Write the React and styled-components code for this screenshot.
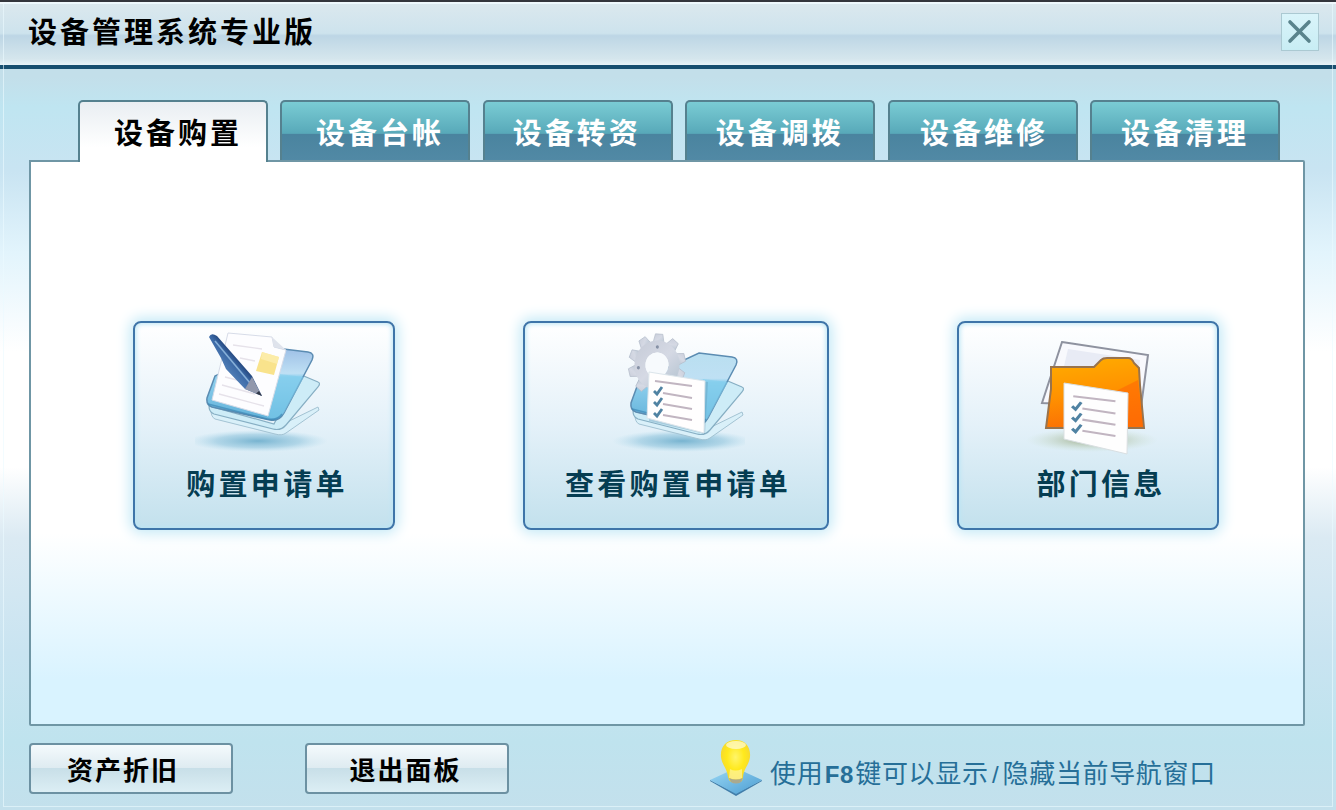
import styled, { createGlobalStyle, css } from 'styled-components';

const tabs = [
  { label: '设备购置', shift: 10 },
  { label: '设备台帐', shift: 9 },
  { label: '设备转资', shift: -2 },
  { label: '设备调拨', shift: -1 },
  { label: '设备维修', shift: 3 },
  { label: '设备清理', shift: 0 },
];

const cards = [
  { label: '购置申请单', width: 262, shift: 6, icon: DocumentIcon },
  { label: '查看购置申请单', width: 306, shift: 4, icon: GearIcon },
  { label: '部门信息', width: 262, shift: 26, icon: FolderIcon },
];

const App = () => {
  return (
    <>
      <GlobalStyle />
      <Window>
        <TitleBar>
          <h1>设备管理系统专业版</h1>
          <CloseButton aria-label="关闭">
            <svg width="38" height="38" viewBox="0 0 38 38">
              <path d="M9 9 L28 28 M28 9 L9 28" stroke="#59838c" strokeWidth="3.6" strokeLinecap="round" />
            </svg>
          </CloseButton>
        </TitleBar>

        <Main>
          <TabList>
            {tabs.map(({ label, shift }, i) => (
              <Tab key={label} $active={i === 0} $shift={shift}>
                {label}
              </Tab>
            ))}
          </TabList>

          <Panel>
            {cards.map(({ label, width, shift, icon: Icon }) => (
              <Card key={label} $width={width} $shift={shift}>
                <Icon />
                <span>{label}</span>
              </Card>
            ))}
          </Panel>

          <Footer>
            <FooterButton $inset={16}>资产折旧</FooterButton>
            <FooterButton $inset={3}>退出面板</FooterButton>
            <Hint>
              <BulbIcon />
              <p>
                使用<b>F8</b>键可以显示<i>/</i>隐藏当前导航窗口
              </p>
            </Hint>
          </Footer>
        </Main>
      </Window>
    </>
  );
};

export default App;

// The open blue folder that sits behind the first two icons
function BookBase({ id, top = '#9dbfe6', x = 0, y = 0 }) {
  return (
    <>
      <defs>
        <linearGradient id={`${id}-cover`} x1="0.3" y1="0" x2="0.3" y2="1">
          <stop offset="0" stopColor={top} />
          <stop offset="0.35" stopColor="#bfe0f4" />
          <stop offset="0.4" stopColor="#8fd0ee" />
          <stop offset="1" stopColor="#5fb0d8" />
        </linearGradient>
        <radialGradient id={`${id}-shadow`}>
          <stop offset="0" stopColor="#65a9c9" stopOpacity="0.85" />
          <stop offset="0.6" stopColor="#82bdd8" stopOpacity="0.5" />
          <stop offset="1" stopColor="#a8d6ea" stopOpacity="0" />
        </radialGradient>
      </defs>
      <ellipse cx={63 + x} cy="111" rx="70" ry="11" fill={`url(#${id}-shadow)`} />
      <g transform={`translate(${x} ${y})`}>
        <path d="M16 80 L80 98 L123 77 L124 80 L91 103 Q87 106 80 104 L20 89 Q16 87 16 80 Z" fill="#d9f0f9" stroke="#a3c3d3" strokeWidth="1" />
        <path d="M14 76 L79 94 L104 44 L123 52 Q126 53 123 57 L91 95 Q86 101 78 99 L19 84 Q14 82 14 76 Z" fill="#cdecf7" stroke="#86aec3" strokeWidth="1.2" />
        <path
          d="M80 18 L113 22 Q120 23 117 30 L89 83 Q84 92 75 90 L17 77 Q11 75 12 68 L20 46 Z"
          fill={`url(#${id}-cover)`}
          stroke="#5b8cb2"
          strokeWidth="1.5"
        />
        <path d="M84 44 L109 47 L89 83 Q84 90 76 88 L72 87 Z" fill="#7fcdec" opacity=".55" />
        <path d="M13 74 L72 89 Q82 91 87 84" fill="none" stroke="#3d88b5" strokeWidth="1.6" opacity=".7" />
      </g>
    </>
  );
}

function DocumentIcon() {
  return (
    <svg width="138" height="126" viewBox="0 0 138 126">
      <defs>
        <linearGradient id="pen" x1="0" y1="1" x2="1" y2="0">
          <stop offset="0.3" stopColor="#5d89bf" />
          <stop offset="0.5" stopColor="#3a68a5" />
          <stop offset="0.62" stopColor="#142f62" />
        </linearGradient>
      </defs>
      <BookBase id="doc" />
      <path d="M33 3 L77 7 L79 17 L91 20 L73 86 L17 70 Z" fill="#fdfdff" stroke="#d7dce8" />
      <path d="M77 7 L79 17 L91 20 Z" fill="#dfe3ec" />
      <path d="M38 15 L67 19 M45 28 L60 31 M30 47 L54 53 M27 55 L60 64 M24 64 L69 76" stroke="#e6e2ea" strokeWidth="1.3" />
      <path d="M67 22 L84 27 L79 45 L61 41 Z" fill="#f9e38c" />
      <path d="M67 22 L84 27 L82 34 L66 29 Z" fill="#fdf0b4" opacity=".7" />
      <path d="M14 7 Q16 2 22 6 L57 46 L67 66 L50 59 L31 39 L26 28 Z" fill="url(#pen)" />
      <path d="M20 11 L55 53" stroke="#86afd8" strokeWidth="1.6" />
      <path d="M57 47 L67 66 L50 59 Z" fill="#9298ac" />
      <path d="M64 61 L67 66 L61 63.500 Z" fill="#303748" />
    </svg>
  );
}

function Checks() {
  return (
    <>
      <path d="M9 8 L46 13 M17 20 L46 25 M17 31 L46 36 M17 42 L46 47" stroke="#c1b5c1" strokeWidth="2" />
      <path d="M8 18 L11 21 L16 14 M8 29 L11 32 L16 25 M8 40 L11 43 L16 36" fill="none" stroke="#4f82a2" strokeWidth="2.8" />
    </>
  );
}

function GearIcon() {
  const teeth = [0, 36, 72, 108, 144, 180, 216, 252, 288, 324];
  return (
    <svg width="138" height="126" viewBox="0 0 138 126">
      <defs>
        <linearGradient id="gear" x1="0" y1="0" x2="1" y2="1">
          <stop offset="0" stopColor="#c9ceda" />
          <stop offset="0.5" stopColor="#d5d9e4" />
          <stop offset="1" stopColor="#b9c6d3" />
        </linearGradient>
      </defs>
      <BookBase id="gearbook" top="#b9dff0" x={12} y={5} />
      <g transform="translate(50 35) rotate(4) scale(.92 1)">
        <g fill="url(#gear)" stroke="#b3bcca" strokeWidth=".7">
          {teeth.map(angle => (
            <path key={angle} d="M-6 -22 L-4 -31 L4 -31 L6 -22 Z" transform={`rotate(${angle})`} />
          ))}
        </g>
        <circle r="18.500" fill="none" stroke="url(#gear)" strokeWidth="12" />
        <circle r="12.500" fill="#f7fafd" />
        <circle cx="-1" cy="-18" r="1.700" fill="#8691a5" />
        <circle cx="-20" cy="4" r="1.700" fill="#8691a5" />
      </g>
      <path d="M43 46 L101 52 L98 104 L42 91 Z" fill="#5f91ae" opacity=".35" />
      <path d="M42 42 L98 51 L97 103 L40 88 Z" fill="#fffefe" stroke="#dce5eb" />
      <g transform="translate(39 43)">
        <Checks />
      </g>
    </svg>
  );
}

function FolderIcon() {
  return (
    <svg width="138" height="126" viewBox="0 0 138 126">
      <defs>
        <linearGradient id="folder" x1="0" y1="0" x2="0.2" y2="1">
          <stop offset="0" stopColor="#ffae00" />
          <stop offset="0.55" stopColor="#ff9200" />
          <stop offset="1" stopColor="#fb7104" />
        </linearGradient>
        <radialGradient id="folder-shadow">
          <stop offset="0" stopColor="#8f9d72" stopOpacity="0.9" />
          <stop offset="1" stopColor="#c7dcc7" stopOpacity="0" />
        </radialGradient>
      </defs>
      <ellipse cx="73" cy="110" rx="66" ry="12" fill="url(#folder-shadow)" />
      <g transform="translate(6 1)">
        <path d="M37 11 L123 24 L116 76 L17 72 Z" fill="#f8f9fd" stroke="#8e929f" strokeWidth="2" />
        <path d="M43 18 L115 29 L111 60 L36 48 Z" fill="#e8ebf5" />
        <path
          d="M26 36 L69 36 L76 29 Q78 27 82 27 L103 27 Q107 27 109 32 L114 37 L115 54 L119 97 L21 97 L26 58 Z"
          fill="url(#folder)"
          stroke="#98734d"
          strokeWidth="2"
        />
        <path d="M113 49 L91 60 L102 96 L118 96 Z" fill="#ff6b05" opacity=".65" />
        <path d="M39 52 L103 62 L102 123 L39 108 Z" fill="#fefefe" stroke="#d9dfe2" />
        <g transform="translate(38 57) scale(1.14 1.02)">
          <Checks />
        </g>
      </g>
    </svg>
  );
}

function BulbIcon() {
  return (
    <svg width="54" height="60" viewBox="0 0 54 60">
      <defs>
        <radialGradient id="bulb" cx="0.5" cy="0.4" r="0.6">
          <stop offset="0" stopColor="#fff56a" />
          <stop offset="0.5" stopColor="#ffe91c" />
          <stop offset="1" stopColor="#f2d336" />
        </radialGradient>
        <linearGradient id="tile" x1="0" y1="0" x2="1" y2="1">
          <stop offset="0" stopColor="#9bd8f5" />
          <stop offset="1" stopColor="#4b9dd2" />
        </linearGradient>
      </defs>
      <path d="M1 42 L27 55 L53 42 L53 43 L27 58 L1 43 Z" fill="#427eaa" />
      <path d="M1 42 L27 30 L53 42 L27 56 Z" fill="url(#tile)" />
      <path d="M27 2 C17 2 11 9 12 19 C13 27 18 30 19 39 Q20 45 27 45 Q34 45 34 39 C35 30 40 27 41 19 C42 9 36 2 27 2 Z" fill="url(#bulb)" />
      <path d="M21 31 Q26 34 33 31 L33 40 Q27 43 20 40 Z" fill="#fff8b8" opacity=".6" />
      <path d="M20 40 Q27 43 34 40 L32 44 Q27 47 22 44 Z" fill="#a9a98f" />
      <ellipse cx="27" cy="7" rx="10" ry="4" fill="#fff" opacity=".6" />
    </svg>
  );
}

const GlobalStyle = createGlobalStyle`
  * {
    box-sizing: border-box;
  }
  body {
    margin: 0;
    font-family: 'Liberation Sans', 'Noto Sans CJK SC', sans-serif;
  }
  h1, p {
    margin: 0;
  }
  button {
    padding: 0;
    font-family: inherit;
  }
`;

const Window = styled.div`
  display: flex;
  flex-direction: column;
  width: 1336px;
  height: 810px;
  overflow: hidden;
  border-top: 2px solid #34363d;
  outline: 1px solid rgba(235, 250, 255, 0.6);
  outline-offset: -4px;
  background: linear-gradient(
    #c3dfea 75px,
    #bfe5f1 105px,
    #c9e4f2 170px,
    #e2f4fc 250px,
    #fff 350px,
    #fff 465px,
    #dbeaf3 535px,
    #c9e4f1 650px,
    #bfe3ee 740px,
    #c3e0ec 808px
  );
`;

const TitleBar = styled.header`
  display: flex;
  flex: 0 0 67px;
  align-items: flex-start;
  justify-content: space-between;
  padding: 10px 17px 0 28px;
  border-top: 2px solid #f0f8fc;
  border-bottom: 4px solid #174f70;
  background: linear-gradient(#dbe8ee, #cde3ed 48%, #bdd6e5 52%, #d5e6ed 90%, #e8f3f8);

  h1 {
    padding-top: 1px;
    font-size: 29px;
    line-height: 36px;
    letter-spacing: 3px;
    color: #000;
  }
`;

const CloseButton = styled.button`
  width: 38px;
  height: 38px;
  margin-top: -1px;
  border: 1px solid #abc9d2;
  background: linear-gradient(#daf4fa, #c8edf4);

  svg {
    display: block;
    margin: -1px;
  }
`;

const Main = styled.main`
  display: flex;
  flex: 1;
  flex-direction: column;
  padding: 31px 31px 0 29px;
`;

const TabList = styled.nav`
  display: flex;
  gap: 12.4px;
  padding-left: 49px;
  z-index: 1;
`;

const Tab = styled.button`
  width: 190px;
  height: 60px;
  padding-left: ${({ $shift }) => Math.max($shift, 0)}px;
  padding-right: ${({ $shift }) => Math.max(-$shift, 0)}px;
  border: 2px solid #55818f;
  border-bottom: 0;
  border-radius: 5px 5px 0 0;
  font-size: 29px;
  font-weight: bold;
  letter-spacing: 3px;
  color: #fff;
  background: linear-gradient(#7accd4, #58a9b9 54%, #4a849f 56%, #5189a5);

  ${({ $active }) =>
    $active &&
    css`
      height: 62px;
      margin-bottom: -2px;
      padding-bottom: 3px;
      color: #000;
      background: linear-gradient(#e9eef2, #fff 75%);
    `}
`;

const Panel = styled.section`
  display: flex;
  align-items: flex-start;
  justify-content: space-between;
  height: 566px;
  padding: 159px 84px 0 102px;
  border: 2px solid #6f96a5;
  border-radius: 0 2px 2px 2px;
  background: linear-gradient(#fff 66%, #d9f3ff 92%);
`;

const Card = styled.button`
  display: flex;
  flex-direction: column;
  align-items: center;
  width: ${({ $width }) => $width}px;
  height: 209px;
  padding-top: 7px;
  border: 2px solid #3e75a9;
  border-radius: 8px;
  background: linear-gradient(#fff, #e4f1f9 50%, #c3e1ed);
  box-shadow: 0 0 14px 3px #c1e8f6, inset 0 0 5px 1px #b9e5f5;

  span {
    margin-top: 9px;
    padding-left: ${({ $shift }) => $shift}px;
    font-size: 29px;
    font-weight: bold;
    line-height: 40px;
    letter-spacing: 3.3px;
    color: #053d52;
  }
`;

const Footer = styled.footer`
  display: flex;
  align-items: flex-start;
  padding-top: 17px;
`;

const FooterButton = styled.button`
  width: 204px;
  height: 51px;
  margin-right: 72px;
  padding-right: ${({ $inset }) => $inset}px;
  border: 2px solid #6c91a2;
  border-radius: 4px;
  font-size: 26px;
  font-weight: bold;
  letter-spacing: 2px;
  color: #000;
  background: linear-gradient(#f4fafc, #deebf1 49%, #c8dfe8 50%, #dceef4);
`;

const Hint = styled.div`
  display: flex;
  align-items: flex-start;
  margin: -5px 0 0 128px;

  p {
    margin-left: 7px;
    padding-top: 17px;
    font-size: 26px;
    line-height: 38px;
    letter-spacing: 0.65px;
    white-space: nowrap;
    color: #266f98;
  }
  b, i {
    display: inline-block;
    width: 32px;
    font-size: 24px;
    text-align: center;
  }
  i {
    width: 14px;
    font-style: normal;
  }
`;
